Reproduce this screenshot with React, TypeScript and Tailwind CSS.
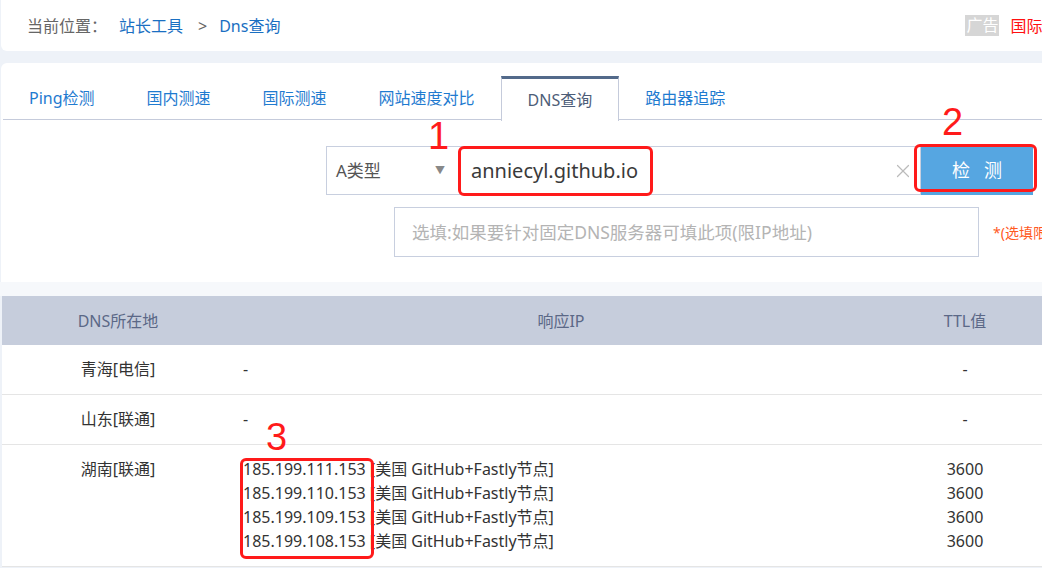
import React from "react";
import { X } from "lucide-react";

const tabs = ["Ping检测", "国内测速", "国际测速", "网站速度对比", "DNS查询", "路由器追踪"];

const rows = [
  { loc: "青海[电信]", ips: [] as string[], ttl: ["-"] },
  { loc: "山东[联通]", ips: [] as string[], ttl: ["-"] },
  {
    loc: "湖南[联通]",
    ips: ["185.199.111.153", "185.199.110.153", "185.199.109.153", "185.199.108.153"],
    ttl: ["3600", "3600", "3600", "3600"],
  },
];

const font = "font-['Noto_Sans','Noto_Sans_CJK_SC',sans-serif]";

export default function App() {
  return (
    <div className={`relative w-[1042px] h-[568px] overflow-hidden bg-[#eef2f8] ${font}`}>
      {/* breadcrumb */}
      <div className="ml-px h-[51px] bg-white rounded-bl-md flex items-center pl-[26px] text-[16px] whitespace-nowrap overflow-hidden">
        <span className="text-[#666]">当前位置：</span>
        <span className="ml-[12px] text-[#1a6fc2]">站长工具</span>
        <span className="ml-[15px] text-[#666]">&gt;</span>
        <span className="ml-[12px] text-[#1a6fc2]">Dns查询</span>
        <div className="ml-[685px] shrink-0 flex items-center">
          <span className="bg-[#d6d6d6] text-white text-[16px] leading-[21px] px-[1px]">广告</span>
          <span className="ml-[11px] text-[#ff1010]">国际物流</span>
        </div>
      </div>

      {/* main card */}
      <div className="mt-[12px] ml-px h-[219px] bg-white rounded-tl-md pt-[13px] overflow-hidden">
        <div className="ml-[2px] flex border-b border-[#c5cbdb] h-[44px]">
          {tabs.map((t) => {
            const active = t === "DNS查询";
            return (
              <div
                key={t}
                className={
                  active
                    ? "px-[26px] h-[45px] -mb-px flex items-center text-[16px] text-[#4d5d78] bg-white border-t-[3px] border-x border-t-[#536a8a] border-x-[#c5cbdb] whitespace-nowrap"
                    : "px-[26px] flex items-center text-[16px] text-[#1f7bd0] whitespace-nowrap"
                }
              >
                {t}
              </div>
            );
          })}
        </div>

        {/* search row */}
        <div className="mt-[26px] ml-[325px] flex">
          <div className="w-[595px] shrink-0 h-[49px] border border-[#c8cfdf] flex items-center">
            <div className="w-[128px] h-full flex items-center pl-[9px] pr-[10px] text-[17px] text-[#555]">
              <span>A类型</span>
              <span className="ml-auto text-[10px] text-[#888]">▼</span>
            </div>
            <div className="flex-1 flex items-center pl-[16px] pr-[6px] text-[20px] text-[#3a3a3a]">
              <span>anniecyl.github.io</span>
              <X className="ml-auto text-[#bbb]" size={22} strokeWidth={1.3} />
            </div>
          </div>
          <button className="w-[112px] shrink-0 h-[49px] bg-[#56a6e1] text-white text-[18px] tracking-[14px] pl-[14px]">
            检测
          </button>
        </div>

        <div className="mt-[12px] ml-[393px] flex items-center">
          <div className="w-[585px] shrink-0 h-[50px] border border-[#c8cfdf] flex items-center pl-[17px] text-[17.5px] text-[#b4b4b4] whitespace-nowrap">
            选填:如果要针对固定DNS服务器可填此项(限IP地址)
          </div>
          <span className="ml-[14px] shrink-0 text-[14px] text-[#ff5a1f] whitespace-nowrap">*(选填限IP地址)</span>
        </div>
      </div>

      {/* table */}
      <div className="h-[14px] bg-[#f6f8fb]" />
      <div className="ml-[2px] bg-white">
        <div className="flex h-[49px] bg-[#c6cddc] items-center text-[16px] text-[#5b6887]">
          <div className="w-[232px] text-center">DNS所在地</div>
          <div className="w-[654px] text-center">响应IP</div>
          <div className="flex-1 text-center">TTL值</div>
        </div>
        {rows.map((r) => (
          <div key={r.loc} className="flex pt-[12px] pb-[13px] border-b border-[#e5e5e5] text-[16px] leading-[24px] text-[#333]">
            <div className="w-[232px] text-center">{r.loc}</div>
            <div className="w-[654px] pl-[9px]">
              {r.ips.length === 0 ? (
                <div>-</div>
              ) : (
                r.ips.map((ip) => (
                  <div key={ip} className="whitespace-nowrap">
                    {ip} [美国 GitHub+Fastly节点]
                  </div>
                ))
              )}
            </div>
            <div className="flex-1 text-center">
              {r.ttl.map((t, i) => (
                <div key={i}>{t}</div>
              ))}
            </div>
          </div>
        ))}
      </div>

      {/* annotations */}
      <div className="absolute left-[458px] top-[146px] w-[195px] h-[50px] border-[3px] border-[#ff1a1a] rounded-md" />
      <div className="absolute left-[914px] top-[144px] w-[123px] h-[48px] border-[3px] border-[#ff1a1a] rounded-md" />
      <div className="absolute left-[240px] top-[458px] w-[134px] h-[101px] border-[3px] border-[#ff1a1a] rounded-md" />
      <span className="absolute left-[428px] top-[114px] text-[38px] leading-[44px] text-[#ff1a1a] font-['Liberation_Sans',sans-serif]">1</span>
      <span className="absolute left-[942px] top-[100px] text-[38px] leading-[44px] text-[#ff1a1a] font-['Liberation_Sans',sans-serif]">2</span>
      <span className="absolute left-[266px] top-[415px] text-[38px] leading-[44px] text-[#ff1a1a] font-['Liberation_Sans',sans-serif]">3</span>
    </div>
  );
}
